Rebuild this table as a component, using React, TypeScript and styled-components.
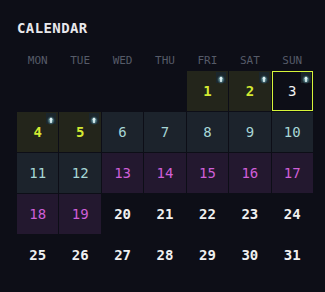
import React from "react";
import styled, { createGlobalStyle, css } from "styled-components";

const Global = createGlobalStyle`
  html, body { margin: 0; padding: 0; background: #0d0e17; }
  body { font-family: "DejaVu Sans Mono", monospace; }
`;

type Kind = "gold" | "selected" | "teal" | "purple" | "plain";

const Panel = styled.div`
  width: 325px;
  height: 292px;
  box-sizing: border-box;
  padding: 20px 12px 0 17px;
  background: #0d0e17;
`;

const Title = styled.h1`
  margin: 0 0 0 0;
  font-family: "DejaVu Sans Mono", monospace;
  font-weight: 700;
  font-size: 14px;
  line-height: 16px;
  letter-spacing: 0.4px;
  color: #e8e8ec;
`;

const Grid = styled.div`
  display: grid;
  grid-template-columns: repeat(7, 1fr);
  gap: 1px;
`;

const WeekRow = styled(Grid)`
  margin-top: 18px;
  height: 14px;
  margin-bottom: 3px;
`;

const WeekDay = styled.div`
  text-align: center;
  font-size: 11px;
  line-height: 14px;
  color: #565b68;
`;

const Days = styled(Grid)`
  grid-auto-rows: 40px;
`;

const kindStyles: Record<Kind, ReturnType<typeof css>> = {
  gold: css`
    background: #23251b;
    color: #d3ea32;
    font-weight: 700;
  `,
  selected: css`
    background: #0d0e17;
    color: #f2f2f2;
    box-shadow: inset 0 0 0 1px #d6f43a;
  `,
  teal: css`
    background: #1c232c;
    color: #a7d6d6;
  `,
  purple: css`
    background: #23182f;
    color: #cf5fd8;
  `,
  plain: css`
    background: transparent;
    color: #f0f0f0;
    font-weight: 700;
  `,
};

const Cell = styled.div<{ $kind: Kind }>`
  position: relative;
  display: flex;
  align-items: center;
  justify-content: center;
  font-size: 14px;
  ${(p) => kindStyles[p.$kind]}
`;

const Empty = styled.div``;

const BadgeBox = styled.span`
  position: absolute;
  top: 1px;
  right: 2px;
  width: 10px;
  height: 11px;
  background: #1b262c;
  display: block;
`;

const Badge = () => (
  <BadgeBox>
    <svg width="10" height="11" viewBox="0 0 10 11">
      <defs>
        <radialGradient id="glow" cx="50%" cy="50%" r="50%">
          <stop offset="0%" stopColor="#cffaff" stopOpacity="0.9" />
          <stop offset="60%" stopColor="#6fb8c4" stopOpacity="0.35" />
          <stop offset="100%" stopColor="#1b262c" stopOpacity="0" />
        </radialGradient>
      </defs>
      <ellipse cx="5" cy="5.5" rx="4.5" ry="5" fill="url(#glow)" />
      <path d="M5 2.5 L7 4.6 L5.7 4.6 L5.7 8 L4.3 8 L4.3 4.6 L3 4.6 Z" fill="#effeff" />
    </svg>
  </BadgeBox>
);

const weekdays = ["MON", "TUE", "WED", "THU", "FRI", "SAT", "SUN"];

const kindOf = (d: number): Kind => {
  if (d === 3) return "selected";
  if (d <= 5) return "gold";
  if (d <= 12) return "teal";
  if (d <= 19) return "purple";
  return "plain";
};

export default function App() {
  const days = Array.from({ length: 31 }, (_, i) => i + 1);
  return (
    <>
      <Global />
      <Panel>
        <Title>CALENDAR</Title>
        <WeekRow>
          {weekdays.map((w) => (
            <WeekDay key={w}>{w}</WeekDay>
          ))}
        </WeekRow>
        <Days>
          {Array.from({ length: 4 }, (_, i) => (
            <Empty key={`e${i}`} />
          ))}
          {days.map((d) => (
            <Cell key={d} $kind={kindOf(d)}>
              {d}
              {d <= 5 && <Badge />}
            </Cell>
          ))}
        </Days>
      </Panel>
    </>
  );
}
